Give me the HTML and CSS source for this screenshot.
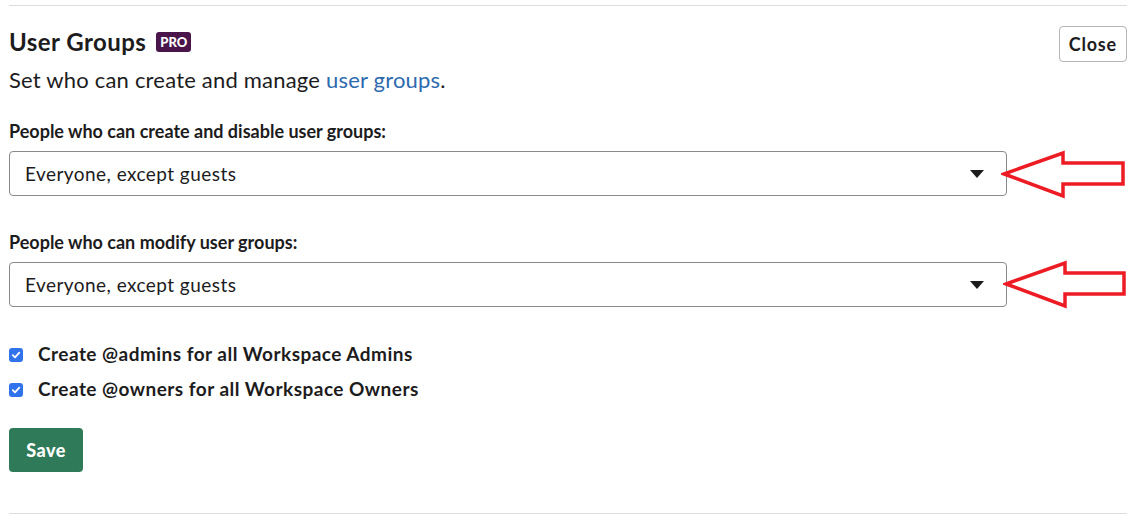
FILE: index.html
```html
<!DOCTYPE html>
<html>
<head>
<meta charset="utf-8">
<link rel="stylesheet" href="styles.css">
</head>
<body>
<div class="page">
  <hr class="rule">
  <div class="header">
    <div class="heading">
      <h2 class="title">User Groups <span class="badge">PRO</span></h2>
      <p class="subtitle">Set who can create and manage <a href="#" class="link">user groups</a>.</p>
    </div>
    <button class="close">Close</button>
  </div>

  <div class="field first">
    <label class="label">People who can create and disable user groups:</label>
    <div class="select"><span>Everyone, except guests</span><span class="caret"></span></div>
  </div>

  <div class="field second">
    <label class="label">People who can modify user groups:</label>
    <div class="select"><span>Everyone, except guests</span><span class="caret"></span></div>
  </div>

  <div class="checks">
    <label class="check"><span class="box"><svg width="10" height="10" viewBox="0 0 10 10"><path d="M1.8 5.2 L4 7.4 L8.3 2.6" fill="none" stroke="#fff" stroke-width="1.8" stroke-linecap="round" stroke-linejoin="round"/></svg></span>Create @admins for all Workspace Admins</label>
    <label class="check"><span class="box"><svg width="10" height="10" viewBox="0 0 10 10"><path d="M1.8 5.2 L4 7.4 L8.3 2.6" fill="none" stroke="#fff" stroke-width="1.8" stroke-linecap="round" stroke-linejoin="round"/></svg></span>Create @owners for all Workspace Owners</label>
  </div>

  <button class="save">Save</button>
  <hr class="rule bottom">

  <svg class="arrow a1" width="130" height="50" viewBox="0 0 130 50"><path d="M3 24 L62 3 L62 13 L122 13 L122 34 L62 34 L62 46 Z" fill="none" stroke="#ed1c24" stroke-width="3.5" stroke-linejoin="miter"/></svg>
  <svg class="arrow a2" width="130" height="50" viewBox="0 0 130 50"><path d="M3 24 L62 3 L62 13 L121 13 L121 34 L62 34 L62 46 Z" fill="none" stroke="#ed1c24" stroke-width="3.5" stroke-linejoin="miter"/></svg>
</div>
</body>
</html>
```
FILE: styles.css
```css
* { box-sizing: border-box; }
body {
  margin: 0;
  font-family: Lato, "Open Sans", sans-serif;
  color: #1d1c1d;
  background: #fff;
}
.page {
  position: relative;
  padding: 5px 10px 0 9px;
  width: 1137px;
}
.rule {
  border: 0;
  border-top: 1px solid #dddddd;
  margin: 0;
}
.header {
  display: flex;
  justify-content: space-between;
  align-items: flex-start;
  padding-top: 20px;
}
.title {
  margin: 0;
  font-size: 24px;
  letter-spacing: 0.45px;
  font-weight: 700;
  line-height: 32px;
  display: flex;
  align-items: center;
}
.badge {
  display: inline-block;
  background: #4a154b;
  color: #fff;
  font-size: 13px;
  letter-spacing: 0;
  font-weight: 900;
  line-height: 20px;
  height: 20px;
  padding: 0 4px;
  border-radius: 3px;
  margin-left: 10px;
  margin-top: -1px;
}
.subtitle {
  margin: 7px 0 0;
  font-size: 22px;
  letter-spacing: 0.2px;
  line-height: 30px;
}
.link { color: #2e6aae; text-decoration: none; }
.close {
  margin-top: 0;
  height: 36px;
  padding: 0 9px;
  font-family: inherit;
  font-size: 18px;
  letter-spacing: 0.8px;
  font-weight: 700;
  color: #1d1c1d;
  background: #fff;
  border: 1px solid #b5b5b5;
  border-radius: 4px;
}
.field.first { margin-top: 25px; }
.field.second { margin-top: 35px; }
.label {
  display: block;
  font-size: 18px;
  font-weight: 700;
  line-height: 22px;
  margin-bottom: 9px;
}
.select {
  width: 998px;
  height: 45px;
  border: 1px solid #8a8a8a;
  border-radius: 4px;
  display: flex;
  align-items: center;
  justify-content: space-between;
  padding: 0 22px 0 15px;
  font-size: 19px;
  letter-spacing: 0.45px;
}
.caret {
  width: 0;
  height: 0;
  border-left: 7px solid transparent;
  border-right: 7px solid transparent;
  border-top: 8px solid #1d1c1d;
}
.checks {
  margin-top: 34px;
  display: flex;
  flex-direction: column;
  gap: 9px;
}
.check {
  display: flex;
  align-items: center;
  font-size: 19px;
  letter-spacing: 0.47px;
  font-weight: 700;
  line-height: 26px;
}
.box {
  width: 14px;
  height: 14px;
  border-radius: 3px;
  background: #3173ea;
  display: flex;
  align-items: center;
  justify-content: center;
  margin-right: 15px;
  margin-top: 2px;
}
.save {
  display: block;
  margin-top: 26px;
  height: 44px;
  width: 74px;
  padding: 0;
  background: #2f7a59;
  color: #fff;
  font-family: inherit;
  font-size: 18px;
  letter-spacing: 0.5px;
  font-weight: 900;
  border: 0;
  border-radius: 4px;
}
.rule.bottom { margin-top: 41px; }
.arrow { position: absolute; }
.a1 { left: 1001px; top: 150px; }
.a2 { left: 1003px; top: 260px; }
```
